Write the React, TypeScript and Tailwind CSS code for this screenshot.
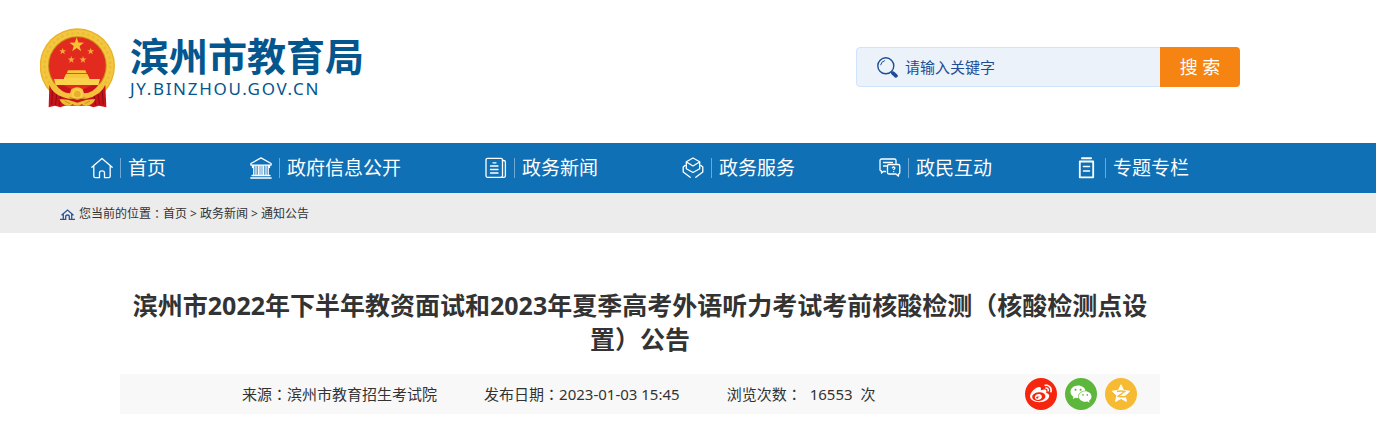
import { useState } from 'react';
import type { ReactNode } from 'react';
import { FaWeibo } from 'react-icons/fa';
import { AiFillWechat } from 'react-icons/ai';

interface NavItem {
  label: string;
  icon: ReactNode;
}

function starPoints(cx: number, cy: number, r: number, inner = 0.4) {
  return Array.from({ length: 10 }, (_, i) => {
    const radius = i % 2 === 0 ? r : r * inner;
    const angle = (Math.PI / 5) * i - Math.PI / 2;
    return `${(cx + radius * Math.cos(angle)).toFixed(1)},${(cy + radius * Math.sin(angle)).toFixed(1)}`;
  }).join(' ');
}

function Emblem() {
  return (
    <svg viewBox="30 24 228 240" className="w-[76px] h-20 shrink-0" aria-hidden="true">
      <circle cx="142" cy="138" r="113" fill="#e9b22a" />
      <circle cx="142" cy="138" r="109" fill="#f3c63d" />
      <circle cx="142" cy="138" r="99" fill="none" stroke="#dfa42c" strokeWidth="6" strokeDasharray="7 9" opacity="0.4" />
      <circle cx="142" cy="137" r="88" fill="#c98a1c" />
      <circle cx="142" cy="137" r="85" fill="#e32a1e" />
      <polygon points={starPoints(140, 75, 23)} fill="#f8c234" />
      <polygon points={starPoints(98, 94, 11)} fill="#f5a93a" />
      <polygon points={starPoints(182, 94, 11)} fill="#f5a93a" />
      <polygon points={starPoints(124, 119, 11)} fill="#f5a93a" />
      <polygon points={starPoints(159, 119, 11)} fill="#f5a93a" />
      <path d="M114 151h52l4 9h-60z M108 162h64l6 12h-76z" fill="#f8c73c" />
      <path d="M72 177h30v-3h76v3h32l-5 18H77z" fill="#fad24c" />
      <path d="M58 196l42 0 42 20 44-20 40 0 3 66-22-5-17 5-12-5h-74l-13 5-16-5-19 5z" fill="#c9121a" />
      <path d="M68 204l-3 50M82 212l-6 44M92 222l-4 34M202 212l7 42M216 204l4 50M192 222l5 34" stroke="#8f0d14" strokeWidth="3" fill="none" />
      <path d="M56 190l22 4q16 24 42 26l4-12q18-12 34 0l4 12q28-2 44-26l22-4q-14 38-60 46h-52q-48-8-60-46z" fill="#f3c13a" />
      <circle cx="142" cy="222" r="17" fill="#f7cf4c" />
      <circle cx="142" cy="222" r="10" fill="#e9ae2c" />
      <path d="M88 238q24-2 38 5l16 5 16-5q14-7 38-5-8 19-30 20l-11-5q-14 9-27 0l-10 5q-22-1-30-20z" fill="#eebc35" />
      <path d="M104 243l16 8M180 243l-16 8M118 232q24 10 48 0" stroke="#b97918" strokeWidth="2" fill="none" />
    </svg>
  );
}

function LineIcon({ children }: { children: ReactNode }) {
  return (
    <svg
      viewBox="0 0 22 22"
      className="w-[22px] h-[22px] shrink-0"
      fill="none"
      stroke="currentColor"
      strokeWidth="1.3"
      strokeLinecap="round"
      strokeLinejoin="round"
      aria-hidden="true"
    >
      {children}
    </svg>
  );
}

const navItems: NavItem[] = [
  {
    label: '首页',
    icon: (
      <LineIcon>
        <path d="M.8 10.2 11 1.4l10.2 8.8M2.8 9.2v10.1q0 1.4 1.4 1.4h4.3v-5q0-1.9 2.5-1.9t2.5 1.9v5h4.3q1.4 0 1.4-1.4V9.2" />
      </LineIcon>
    ),
  },
  {
    label: '政府信息公开',
    icon: (
      <LineIcon>
        <path d="M.9 6.5 11 .9l10.1 5.6v1.6H.9zM2.5 8.5v2M19.5 8.5v2M3.8 9v9M6 9v9M8.3 9v9M10 9v9M12 9v9M13.7 9v9M16 9v9M18.2 9v9M2 18.5h18M.8 21h20.4" />
      </LineIcon>
    ),
  },
  {
    label: '政务新闻',
    icon: (
      <LineIcon>
        <rect x="1" y="1.3" width="16.5" height="19" rx="1.5" />
        <path d="M17.5 3.5h1.2q1.7 0 1.7 1.7v13.5q0 1.6-1.7 1.6h-3M8 5.8h3M5.5 9h7.5M5.5 12.5h7.5M5.5 16h7.5" />
      </LineIcon>
    ),
  },
  {
    label: '政务服务',
    icon: (
      <LineIcon>
        <path d="m11 1 6.7 3.8v7L11 15.5l-6.7-3.7v-7zM4.8 5.3 8.5 7.5M17.2 5.3l-3.7 2.2M8.5 7.5 11 9l2.5-1.5M3 8.5 1.2 10v5l7 5.3M19 8.5l1.8 1.5v5l-7 5.3" />
      </LineIcon>
    ),
  },
  {
    label: '政民互动',
    icon: (
      <LineIcon>
        <path d="M6.5 14.5H4.2L2.5 16v-2Q1 14 1 12.5v-9Q1 2 2.5 2h13Q17 2 17 3.5v3M4.5 5.5h9M4.5 9h3" />
        <path d="M10 7.5h9.3q1.5 0 1.5 1.5v6.5q0 1.5-1.3 1.5v2.2L17 17h-7q-1.5 0-1.5-1.5V9q0-1.5 1.5-1.5z" />
        <path d="M13.3 10.7q1.3-1.4 2.5 0 .3 1-1.1 1.8M14.7 14.6v.1" />
      </LineIcon>
    ),
  },
  {
    label: '专题专栏',
    icon: (
      <LineIcon>
        <path d="M6 1.2h9" strokeWidth="2" />
        <rect x="3.8" y="4.5" width="13.4" height="15.8" strokeWidth="1.8" />
        <path d="M7.5 9.5h6M7.5 14h6" strokeWidth="1.6" />
      </LineIcon>
    ),
  },
];

const crumbs = ['政务新闻', '通知公告'];

// The Traditional face keeps the full-width colon in the middle of its box.
function Colon() {
  return <span className="font-['Noto_Sans_CJK_TC',sans-serif]">：</span>;
}

function SearchBox() {
  const [keyword, setKeyword] = useState('');

  return (
    <form
      role="search"
      onSubmit={(e) => e.preventDefault()}
      className="flex h-10 w-96 rounded overflow-hidden"
    >
      <label
        htmlFor="keyword"
        className="flex flex-1 min-w-0 items-center gap-[7px] pl-5 rounded-l border border-r-0 border-[#cfe3fc] bg-[#ebf2fa] text-[#1e4d96]"
      >
        <svg viewBox="0 0 21 21" className="w-[21px] h-[21px] shrink-0" fill="none" stroke="currentColor" aria-hidden="true">
          <circle cx="8.8" cy="8.8" r="8" strokeWidth="1.4" />
          <path d="M3.6 8.2q.7-3.7 4.3-4.6" strokeWidth="1" />
          <path d="m14.3 14.5 1.5 1.5" strokeWidth="1.5" />
          <path d="m16 16.2 2.9 2.6" strokeWidth="3.8" strokeLinecap="round" />
        </svg>
        <input
          id="keyword"
          type="text"
          aria-label="请输入关键字"
          value={keyword}
          onChange={(e) => setKeyword(e.target.value)}
          placeholder="请输入关键字"
          className="flex-1 min-w-0 bg-transparent text-[15px] outline-none placeholder:text-[#1e4d96]"
        />
      </label>
      <button type="submit" className="w-20 bg-[#f68412] text-lg text-white whitespace-pre">
        搜 索
      </button>
    </form>
  );
}

export default function App() {
  return (
    <div className="min-h-screen bg-white font-['Noto_Sans','Noto_Sans_CJK_SC',sans-serif] text-[#333]">
      <header className="max-w-[1280px] px-10 pt-7 pb-[35px] flex items-start justify-between">
        <a href="#" className="flex items-start gap-3.5 text-[#04568f]">
          <Emblem />
          <span className="block pt-1">
            <span className="block text-[39px] leading-[48px] font-bold">滨州市教育局</span>
            <span className="block text-[17px] leading-[18px] tracking-widest">JY.BINZHOU.GOV.CN</span>
          </span>
        </a>
        <div className="pt-[19px]">
          <SearchBox />
        </div>
      </header>

      <nav className="bg-[#1070b5] text-white">
        <ul className="max-w-[1280px] h-[50px] pl-[91px] pr-[91px] flex items-center justify-between">
          {navItems.map((item) => (
            <li key={item.label}>
              <a href="#" className="flex items-center gap-[7px] text-[19px] leading-7 whitespace-nowrap">
                {item.icon}
                <span className="w-px h-5 bg-[#6fa9d3]" />
                <span>{item.label}</span>
              </a>
            </li>
          ))}
        </ul>
      </nav>

      <div className="bg-[#ececec]">
        <div className="max-w-[1280px] h-10 pt-0.5 px-[60px] flex items-center text-xs">
          <svg viewBox="0 0 15 11" className="w-[15px] h-[11px] mr-1 text-[#2a5699]" fill="none" stroke="currentColor" strokeWidth="1.3" aria-hidden="true">
            <path d="M1.5 6.3 7.5 1l6 5.3M3.3 5v5M11.7 5v5M0 10.3h5.7V7q1.8-2 3.6 0v3.3H15" />
          </svg>
          <span>您当前的位置</span>
          <Colon />
          <a href="#">首页</a>
          {crumbs.map((crumb) => (
            <span key={crumb} className="pl-[3px] whitespace-pre">
              {'> '}
              <a href="#">{crumb}</a>
            </span>
          ))}
        </div>
      </div>

      <main className="max-w-[1280px] px-[120px] pt-[55px]">
        <h1 className="text-center text-[25px] leading-[34px] font-bold">
          滨州市2022年下半年教资面试和2023年夏季高考外语听力考试考前核酸检测（核酸检测点设置）公告
        </h1>
        <div className="mt-[18px] h-10 pl-[122px] pr-[23px] flex items-center justify-between bg-[#f8f8f8]">
          <div className="flex gap-[47px] text-[15px] whitespace-nowrap">
            <span>
              来源
              <Colon />
              滨州市教育招生考试院
            </span>
            <span>
              发布日期
              <Colon />
              2023-01-03 15:45
            </span>
            <span className="flex gap-2">
              <span>
                浏览次数
                <Colon />
              </span>
              <span>16553</span>
              <span>次</span>
            </span>
          </div>
          <div className="flex gap-2 text-white">
            <button type="button" aria-label="微博" className="w-8 h-8 rounded-full bg-[#f6260e] flex items-center justify-center">
              <FaWeibo className="w-[22px] h-[22px]" />
            </button>
            <button type="button" aria-label="微信" className="w-8 h-8 rounded-full bg-[#5db73c] flex items-center justify-center">
              <AiFillWechat className="w-6 h-6" />
            </button>
            <button type="button" aria-label="QQ空间" className="w-8 h-8 rounded-full bg-[#f6bb33] flex items-center justify-center">
              <svg viewBox="0 0 22 22" className="w-[22px] h-[22px]" aria-hidden="true">
                <polygon points={starPoints(11, 11, 9.2, 0.48)} fill="currentColor" stroke="currentColor" strokeLinejoin="round" />
                <path d="M7 8.5q4-.8 7.5 0L8.3 13.2q3.5 1 8 .2" fill="none" stroke="#f6bb33" strokeWidth="1.5" />
              </svg>
            </button>
          </div>
        </div>
      </main>
    </div>
  );
}
